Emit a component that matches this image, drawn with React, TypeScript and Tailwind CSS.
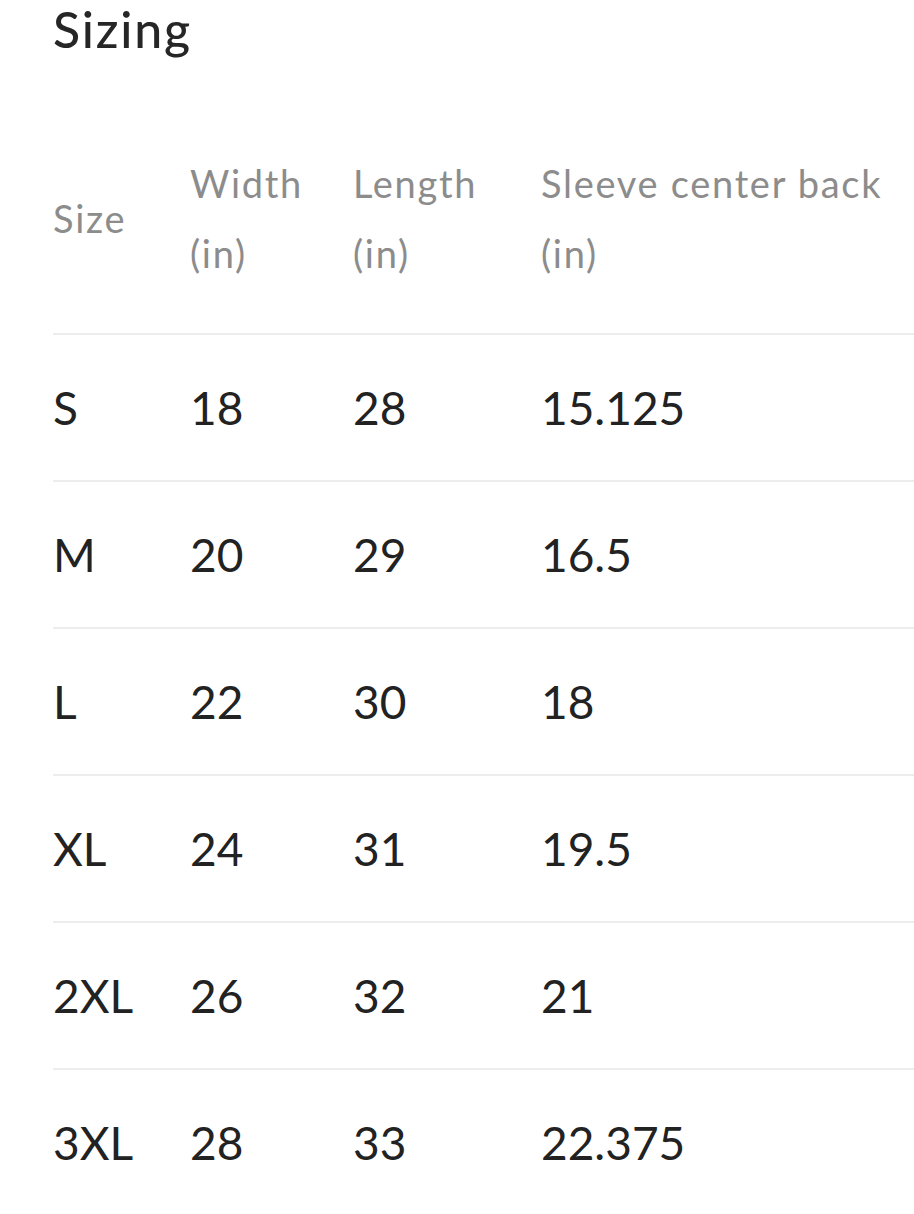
const rows = [
  { size: 'S', width: '18', length: '28', sleeve: '15.125' },
  { size: 'M', width: '20', length: '29', sleeve: '16.5' },
  { size: 'L', width: '22', length: '30', sleeve: '18' },
  { size: 'XL', width: '24', length: '31', sleeve: '19.5' },
  { size: '2XL', width: '26', length: '32', sleeve: '21' },
  { size: '3XL', width: '28', length: '33', sleeve: '22.375' },
];

export default function App() {
  return (
    <div className="min-h-[1214px] w-[914px] overflow-hidden bg-white pl-[53px] font-['Lato',sans-serif]">
      <h1 className="text-[50px] leading-[58px] font-medium tracking-[1.8px] text-[#262626]">Sizing</h1>

      <table className="mt-[45px] w-[861px] border-collapse text-left">
        <thead>
          <tr className="border-b-2 border-[#ededed] text-[38px] leading-[70px] tracking-[1.7px] text-[#8c8c8c]">
            <th className="w-[137px] py-[45px] align-middle font-normal">Size</th>
            <th className="w-[163px] py-[45px] font-normal">
              <span className="block">Width</span>
              <span className="block">(in)</span>
            </th>
            <th className="w-[188px] py-[45px] font-normal">
              <span className="block">Length</span>
              <span className="block">(in)</span>
            </th>
            <th className="py-[45px] font-normal whitespace-nowrap">
              <span className="block">Sleeve center back</span>
              <span className="block">(in)</span>
            </th>
          </tr>
        </thead>
        <tbody>
          {rows.map(r => (
            <tr key={r.size} className="border-b-2 border-[#ededed] text-[46px] leading-[55px] text-[#222222] last:border-b-0">
              <td className="py-[45px]">{r.size}</td>
              <td className="py-[45px]">{r.width}</td>
              <td className="py-[45px]">{r.length}</td>
              <td className="py-[45px]">{r.sleeve}</td>
            </tr>
          ))}
        </tbody>
      </table>
    </div>
  );
}
